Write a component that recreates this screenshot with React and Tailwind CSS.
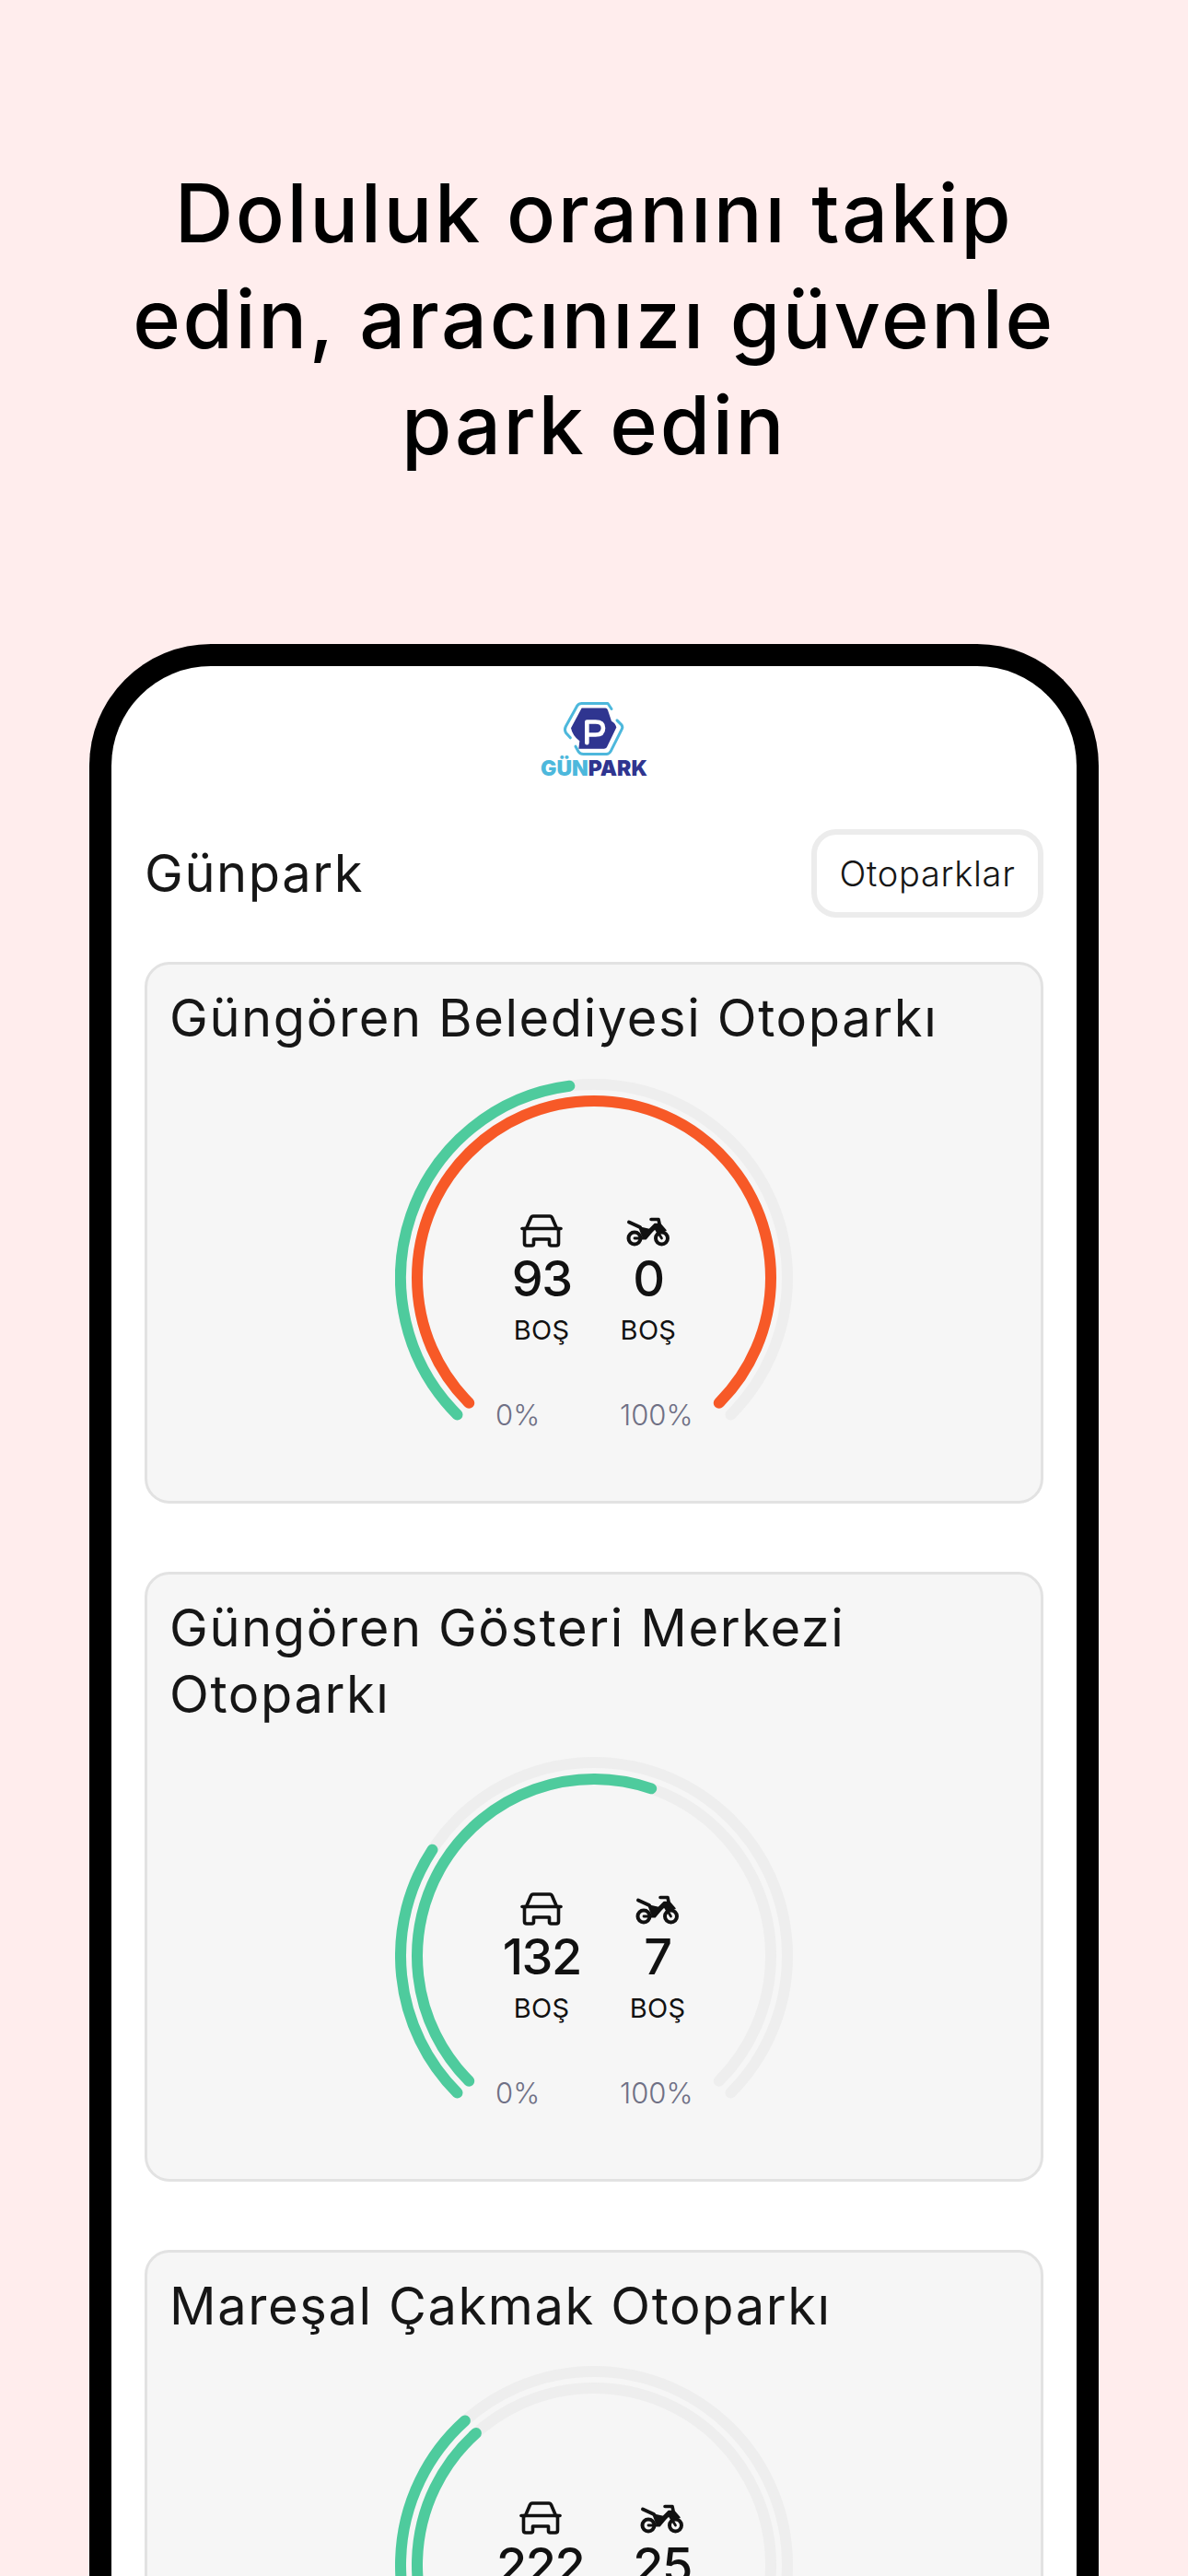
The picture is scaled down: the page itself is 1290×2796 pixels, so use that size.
const font = "font-['Inter','Liberation_Sans',sans-serif]";

// angles are degrees clockwise from 12 o'clock
const polar = (r, deg) => {
    const a = (deg * Math.PI) / 180;
    return [r * Math.sin(a), -r * Math.cos(a)];
};

const arcPath = (r, from, to) => {
    const [x1, y1] = polar(r, from);
    const [x2, y2] = polar(r, to);
    const large = to - from > 180 ? 1 : 0;
    return `M ${x1.toFixed(2)} ${y1.toFixed(2)} A ${r} ${r} 0 ${large} 1 ${x2.toFixed(2)} ${y2.toFixed(2)}`;
};

function Ring({ r, pct, color }) {
    const end = -135 + (270 * pct) / 100;
    return (
        <>
            <path d={arcPath(r, -135, 135)} fill="none" stroke="#eeeeee" strokeWidth="12" strokeLinecap="round" />
            <path d={arcPath(r, -135, end)} fill="none" stroke={color} strokeWidth="12" strokeLinecap="round" />
        </>
    );
}

function CarIcon() {
    return (
        <svg width="46" height="36" viewBox="0 0 46 36" fill="none" stroke="#111111" strokeWidth="3.6" strokeLinecap="round" strokeLinejoin="round">
            <path d="M2 15.500H44" />
            <path d="M6.500 15.500L11.500 3.800Q12.200 2 14 2H32Q33.800 2 34.500 3.800L39.500 15.500" />
            <path d="M4.500 15.500V31.500Q4.500 34 7 34H12.500Q14.500 34 14.500 32V27H31.500V32Q31.500 34 33.500 34H39Q41.500 34 41.500 31.500V15.500" />
        </svg>
    );
}

function MotoIcon() {
    return (
        <svg width="48" height="33" viewBox="0 0 48 33" fill="none" stroke="#111111" strokeLinecap="round" strokeLinejoin="round">
            <circle cx="9" cy="23" r="6.500" strokeWidth="4" />
            <circle cx="38.500" cy="23" r="6.500" strokeWidth="4" />
            <path d="M9 23H21L31 11L38.500 23" strokeWidth="2.800" />
            <path d="M3 5.500L15 11" strokeWidth="4" />
            <path d="M27 2.500H35L36 7" strokeWidth="3.600" />
            <path d="M14 11L25 13.500L31 7.500H37L43 14.500H36L31 13L21.500 21.500H18Z" fill="#111111" strokeWidth="1.500" />
        </svg>
    );
}

function Stat({ icon, value }) {
    return (
        <div className="flex flex-col items-center">
            <div className="flex h-[36px] items-end">{icon}</div>
            <div className="mt-[11px] text-[54px] leading-[46px] font-medium tracking-[-1.5px] text-[#111111]">{value}</div>
            <div className="mt-[18px] text-[29px] leading-[30px] tracking-[0.3px] text-[#111111]">BOŞ</div>
        </div>
    );
}

function Gauge({ outer, inner, innerColor = "#4ecb9d", cars, motos }) {
    return (
        <div className="relative mx-auto h-[431px] w-[432px]">
            <svg className="absolute inset-0" width="432" height="431" viewBox="-216 -216 432 431">
                <Ring r={210} pct={outer} color="#4ecb9d" />
                <Ring r={192} pct={inner} color={innerColor} />
            </svg>
            <div className="absolute inset-x-0 top-[147px] flex justify-center gap-[53px]">
                <Stat icon={<CarIcon />} value={cars} />
                <Stat icon={<MotoIcon />} value={motos} />
            </div>
            <div className="absolute top-[347px] left-[109px] text-[31px] leading-[36px] font-[350] text-[#6f7085]">0%</div>
            <div className="absolute top-[347px] left-[244px] text-[31px] leading-[36px] font-[350] text-[#6f7085]">100%</div>
        </div>
    );
}

function Card({ title, children, className }) {
    return (
        <div className={`rounded-[27px] border-[3px] border-[#e2e2e2] bg-[#f6f6f6] px-[24px] pt-[22px] ${className}`}>
            <div className="text-[56px] leading-[72px] font-normal tracking-[1.6px] text-[#161616]">{title}</div>
            {children}
        </div>
    );
}

function Logo() {
    return (
        <div className="flex flex-col items-center">
            <svg width="70" height="62" viewBox="270 90 210 185" fill="none">
                <path d="M432 118L420 100H335Q325 100 320 108L283 175Q278 185 283 195L298 212" stroke="#4db8dc" strokeWidth="9" strokeLinecap="round" strokeLinejoin="round" />
                <path d="M315 240L325 258Q330 265 340 265H415Q425 265 430 255L465 185Q470 178 465 170L450 155" stroke="#4db8dc" strokeWidth="9" strokeLinecap="round" strokeLinejoin="round" />
                <path d="M335 115H412Q418 115 420 122L432 158Q445 165 448 178L418 240Q415 248 408 248H325L328 222Q305 205 300 180Z" fill="#2f3590" />
                <path d="M352 228V160H380Q405 160 405 180Q405 202 380 202H354" stroke="#ffffff" strokeWidth="14" strokeLinecap="round" strokeLinejoin="round" />
            </svg>
            <div className="mt-[2px] flex text-[23px] leading-[20px] font-black">
                <span className="text-[#4db8dc]">GÜN</span>
                <span className="text-[#2f3590]">PARK</span>
            </div>
        </div>
    );
}

export default function App() {
    return (
        <div className={`h-[2796px] w-[1290px] overflow-hidden bg-[#ffeded] ${font}`}>
            <h1 className="pt-[174px] text-center text-[88px] leading-[115px] font-medium tracking-[2.6px] text-black">
                Doluluk oranını takip
                <br />
                edin, aracınızı güvenle
                <br />
                park edin
            </h1>

            <div className="mx-auto mt-[180px] h-[2200px] w-[1096px] rounded-t-[132px] border-[24px] border-b-0 border-black bg-white px-[36px]">
                <div className="flex justify-center pt-[37px]">
                    <Logo />
                </div>

                <div className="mt-[56px] flex items-center justify-between">
                    <div className="text-[56px] leading-[70px] font-normal tracking-[1.6px] text-[#161616]">Günpark</div>
                    <button className="h-[96px] w-[252px] rounded-[27px] border-[6px] border-[#ececec] bg-white text-center text-[38px] font-[350] tracking-[0.7px] text-[#161616]">
                        Otoparklar
                    </button>
                </div>

                <Card title="Güngören Belediyesi Otoparkı" className="mt-[48px] h-[588px]">
                    <div className="pt-[30px]">
                        <Gauge outer={47.3} inner={100} innerColor="#f75927" cars={93} motos={0} />
                    </div>
                </Card>

                <Card title={<>Güngören Gösteri Merkezi<br />Otoparkı</>} className="mt-[74px] h-[662px]">
                    <div className="pt-[32px]">
                        <Gauge outer={29} inner={57} cars={132} motos={7} />
                    </div>
                </Card>

                <Card title="Mareşal Çakmak Otoparkı" className="mt-[74px] h-[600px]">
                    <div className="pt-[29px]">
                        <Gauge outer={34.5} inner={34.5} cars={222} motos={25} />
                    </div>
                </Card>
            </div>
        </div>
    );
}
